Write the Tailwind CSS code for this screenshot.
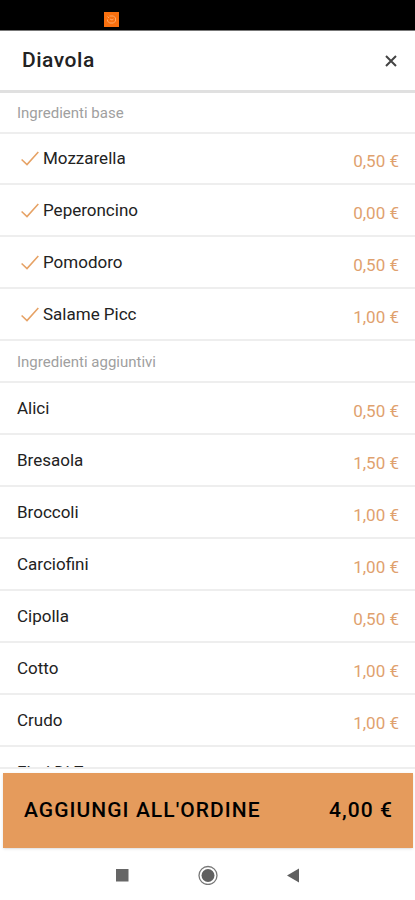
<!DOCTYPE html>
<html lang="it">
<head>
    <meta charset="UTF-8">
    <meta name="viewport" content="width=device-width, initial-scale=1.0">
    <title>Diavola</title>
    <script src="https://cdn.jsdelivr.net/npm/@tailwindcss/browser@4"></script>
</head>
<body class="flex flex-col h-screen overflow-hidden bg-white font-[Roboto,sans-serif] text-[#222]">
    <!-- status bar -->
    <div class="shrink-0 h-[31px] bg-black border-b border-[#777] pl-26 pt-3">
        <svg class="w-[15px] h-[15px]" viewBox="0 0 15 15" fill="none">
            <rect width="15" height="15" fill="#f9700f"/>
            <path d="M3.5 4.5 5 6M5.5 4h4l2 2v3l-2 2h-4l-2-2V7.500M6 7l2 1 1.500-1" stroke="#ffa866"/>
        </svg>
    </div>

    <header class="shrink-0 h-[62px] flex items-center justify-between pl-[22px] pr-4 border-b-3 border-[#e0e0e0]">
        <h1 class="text-[21px] font-medium tracking-wide">Diavola</h1>
        <button type="button" aria-label="Chiudi" class="w-4 h-4 flex items-center justify-center">
            <svg class="w-3 h-3" viewBox="0 0 12 12" stroke="#444" stroke-width="2"><path d="M1 1 11 11M11 1 1 11"/></svg>
        </button>
    </header>

    <main class="flex-1 min-h-0 overflow-hidden border-b-2 border-[#eee]">
        <h2 class="h-[41px] flex items-center pt-[2px] px-[17px] border-b-2 border-[#eee] text-[15px] text-[#a0a0a0]">Ingredienti base</h2>
        <ul id="baseList" class="-mt-px"></ul>
        <h2 class="h-[42px] flex items-center pt-[2px] px-[17px] border-b-2 border-[#eee] text-[15px] text-[#a0a0a0]">Ingredienti aggiuntivi</h2>
        <ul id="extraList"></ul>
    </main>

    <footer class="shrink-0 pt-1 pl-[3px] pr-[2px]">
        <button type="button" class="w-full h-[75px] flex items-center justify-between pl-[21px] pr-5 bg-[#e59b5c] text-black text-[21px] font-medium tracking-wider shadow">
            <span>AGGIUNGI ALL'ORDINE</span>
            <span>4,00 €</span>
        </button>
    </footer>

    <!-- system navigation -->
    <nav class="shrink-0 h-[52px] pt-[17px] flex justify-center gap-[66px]">
        <button type="button" aria-label="App recenti" class="w-5 h-5">
            <svg class="w-5 h-5" viewBox="0 0 20 20"><rect x="4" y="4" width="12.500" height="12.500" fill="#666"/></svg>
        </button>
        <button type="button" aria-label="Home" class="w-5 h-5">
            <svg class="w-5 h-5" viewBox="0 0 20 20"><circle cx="10" cy="10.500" r="9" fill="none" stroke="#777" stroke-width="1.300"/><circle cx="10" cy="10.500" r="6.500" fill="#606060"/></svg>
        </button>
        <button type="button" aria-label="Indietro" class="w-5 h-5">
            <svg class="w-5 h-5" viewBox="0 0 20 20"><path d="M3 10.500 15 3.500v14z" fill="#606060"/></svg>
        </button>
    </nav>

    <script>
        const base = [
            ['Mozzarella', '0,50'],
            ['Peperoncino', '0,00'],
            ['Pomodoro', '0,50'],
            ['Salame Picc', '1,00']
        ];
        const extra = [
            ['Alici', '0,50'],
            ['Bresaola', '1,50'],
            ['Broccoli', '1,00'],
            ['Carciofini', '1,00'],
            ['Cipolla', '0,50'],
            ['Cotto', '1,00'],
            ['Crudo', '1,00'],
            ['Fiori Di Zucca', '1,00']
        ];
        const check = '<svg class="w-[18px] h-[15px] mx-1 mb-[2px]" viewBox="0 0 18 15" fill="none" stroke="#e6a265" stroke-width="1.600"><path d="M.6 8.500 6 13.500 17.300 1"/></svg>';

        function renderList(id, items, selected) {
            document.getElementById(id).innerHTML = items.map(([name, price]) => `
                <li class="h-[52px] flex items-center justify-between pl-[17px] pr-4 border-b-2 border-[#eee]">
                    <span class="flex items-center pt-[2px] text-[17px]">${selected ? check : ''}${name}</span>
                    <span class="pt-2 text-[17px] text-[#dfa16e]">${price} €</span>
                </li>
            `).join('');
        }

        renderList('baseList', base, true);
        renderList('extraList', extra, false);
    </script>
</body>
</html>
